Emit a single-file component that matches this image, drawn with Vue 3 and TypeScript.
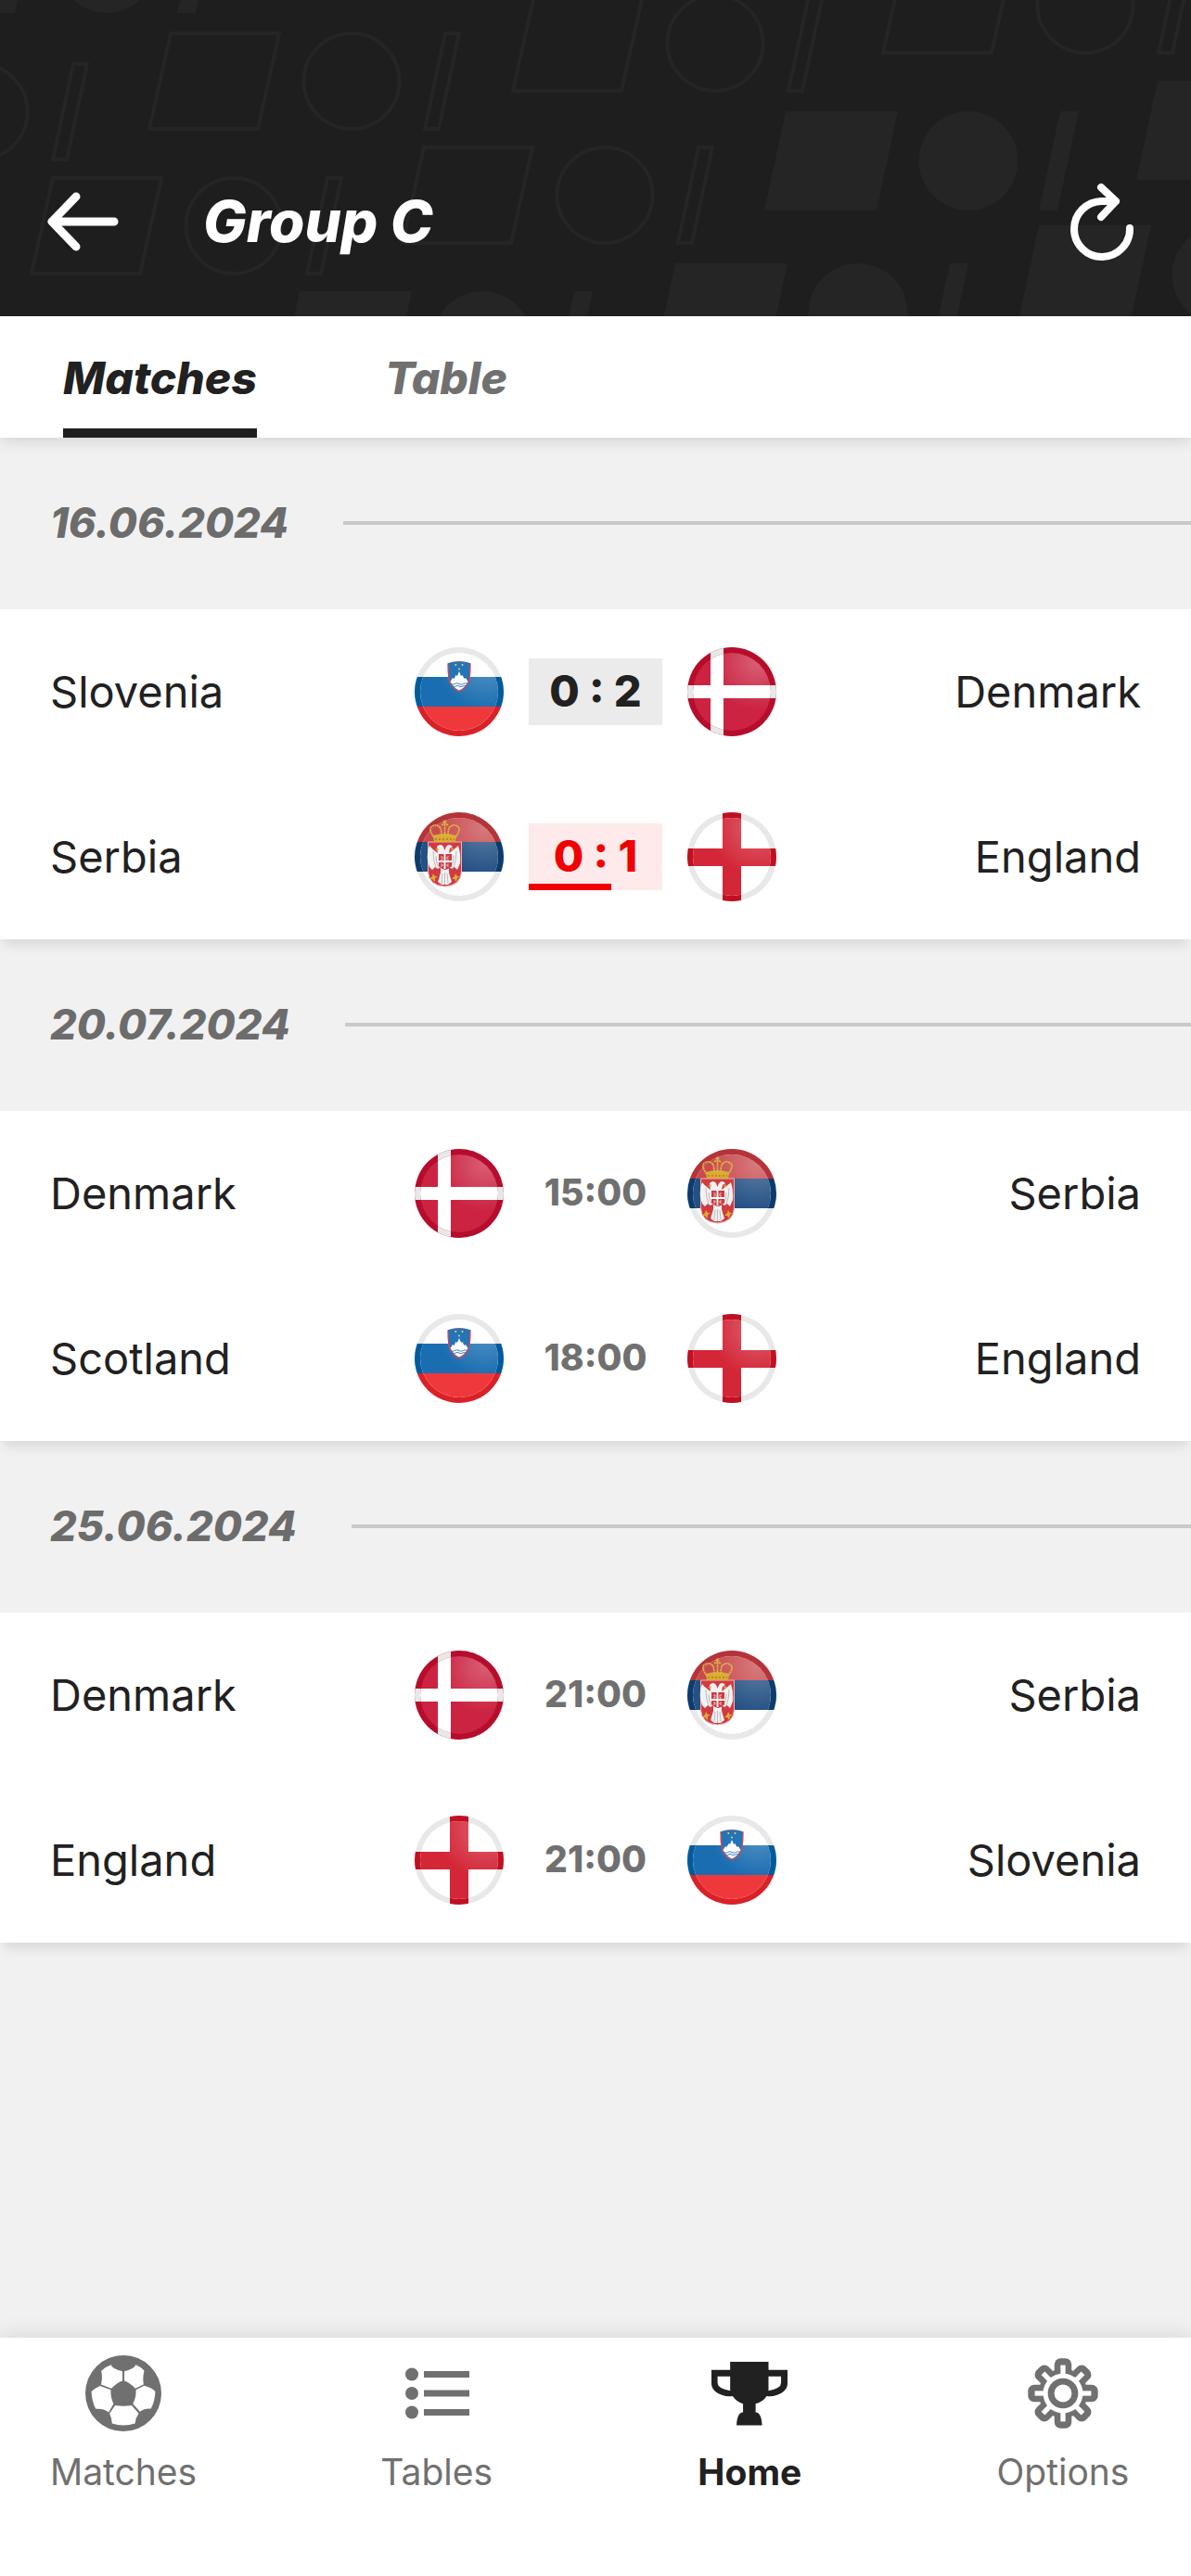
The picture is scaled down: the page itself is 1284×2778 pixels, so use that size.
<script setup lang="ts">
import { ref } from 'vue'

type Team = 'Slovenia' | 'Denmark' | 'Serbia' | 'England' | 'Scotland'

interface Match {
  home: Team
  homeFlag: string
  away: Team
  awayFlag: string
  result: string
  state: 'finished' | 'live' | 'upcoming'
  progress?: number
}

interface MatchDay {
  date: string
  matches: Match[]
}

const tabs = ['Matches', 'Table']
const activeTab = ref('Matches')

const matchDays: MatchDay[] = [
  {
    date: '16.06.2024',
    matches: [
      { home: 'Slovenia', homeFlag: 'slovenia', away: 'Denmark', awayFlag: 'denmark', result: '0 : 2', state: 'finished' },
      { home: 'Serbia', homeFlag: 'serbia', away: 'England', awayFlag: 'england', result: '0 : 1', state: 'live', progress: 62 },
    ],
  },
  {
    date: '20.07.2024',
    matches: [
      { home: 'Denmark', homeFlag: 'denmark', away: 'Serbia', awayFlag: 'serbia', result: '15:00', state: 'upcoming' },
      { home: 'Scotland', homeFlag: 'slovenia', away: 'England', awayFlag: 'england', result: '18:00', state: 'upcoming' },
    ],
  },
  {
    date: '25.06.2024',
    matches: [
      { home: 'Denmark', homeFlag: 'denmark', away: 'Serbia', awayFlag: 'serbia', result: '21:00', state: 'upcoming' },
      { home: 'England', homeFlag: 'england', away: 'Slovenia', awayFlag: 'slovenia', result: '21:00', state: 'upcoming' },
    ],
  },
]

const outlined = [[159, 34], [-242, 67], [551, -7], [950, -48], [32, 190], [432, 157]]
const filled = [[824, 120], [1225, 87], [300, 314], [705, 284], [1097, 243], [-105, -93]]

const navItems = [
  { label: 'Matches', icon: 'ball' },
  { label: 'Tables', icon: 'list' },
  { label: 'Home', icon: 'cup' },
  { label: 'Options', icon: 'gear' },
]
const activeNav = ref('Home')
</script>

<template>
  <div class="app">
    <svg class="defs" aria-hidden="true">
      <defs>
        <clipPath id="disc"><circle cx="48" cy="48" r="48" /></clipPath>
        <clipPath id="inner"><circle cx="48" cy="48" r="42" /></clipPath>
        <radialGradient id="gloss" gradientUnits="userSpaceOnUse" cx="76" cy="16" r="52">
          <stop offset="0" stop-color="#fff" stop-opacity=".27" />
          <stop offset="1" stop-color="#fff" stop-opacity="0" />
        </radialGradient>
      </defs>

      <symbol id="flag-denmark" viewBox="0 0 96 96">
        <g clip-path="url(#disc)">
          <rect width="96" height="96" fill="#b60d2d" />
          <path d="M25 0h14v96H25zM0 41h96v14H0z" fill="#e8e8e8" />
        </g>
        <g clip-path="url(#inner)">
          <rect width="96" height="96" fill="#cb2341" />
          <circle cx="48" cy="48" r="42" fill="url(#gloss)" />
          <path d="M25 0h14v96H25zM0 41h96v14H0z" fill="#fff" />
        </g>
      </symbol>

      <symbol id="flag-england" viewBox="0 0 96 96">
        <g clip-path="url(#disc)">
          <rect width="96" height="96" fill="#e8e8e8" />
          <path d="M38 0h20v96H38zM0 39h96v19H0z" fill="#c01021" />
        </g>
        <g clip-path="url(#inner)">
          <rect width="96" height="96" fill="#fff" />
          <path d="M38 0h20v96H38zM0 39h96v19H0z" fill="#d32637" />
          <circle cx="48" cy="48" r="42" fill="url(#gloss)" />
        </g>
      </symbol>

      <symbol id="flag-slovenia" viewBox="0 0 96 96">
        <g clip-path="url(#disc)">
          <rect width="96" height="96" fill="#e8e8e8" />
          <rect y="32" width="96" height="32" fill="#005b9c" />
          <rect y="64" width="96" height="32" fill="#da2128" />
        </g>
        <g clip-path="url(#inner)">
          <rect width="96" height="96" fill="#fff" />
          <rect y="32" width="96" height="32" fill="#1a6db0" />
          <rect y="64" width="96" height="32" fill="#ee383c" />
          <circle cx="48" cy="48" r="42" fill="url(#gloss)" />
        </g>
        <path d="M36 18Q48 14 60 18Q60 35 57 40Q54 45 48 48Q42 45 39 40Q36 35 36 18Z" fill="#2474b8" stroke="#e0404c" stroke-width="1.3" />
        <path d="M36 18Q48 14 60 18" fill="none" stroke="#2474b8" stroke-width="1.6" />
        <path d="M38.500 37L41 33l1.500 1 2-4 1.500 1 2-5 2 5 1.500-1 2 4 1.500-1 2.500 4Q54 44 48 46.500 42 44 38.500 37Z" fill="#fff" />
        <path d="M39 39.500q2.300 1.500 4.500 0t4.500 0 4.500 0 4.500 0M40.500 42q2 1.200 3.800 0t3.700 0 3.700 0 3.700 0" fill="none" stroke="#2474b8" stroke-width=".9" />
        <g fill="#e8dc50">
          <circle cx="44.300" cy="19" r="1" /><circle cx="51.500" cy="19" r="1" /><circle cx="48" cy="23.500" r="1" />
        </g>
      </symbol>

      <symbol id="flag-serbia" viewBox="0 0 96 96">
        <g clip-path="url(#disc)">
          <rect width="96" height="96" fill="#e8e8e8" />
          <rect width="96" height="32" fill="#b43439" />
          <rect y="32" width="96" height="32" fill="#0c3b6d" />
        </g>
        <g clip-path="url(#inner)">
          <rect width="96" height="96" fill="#fff" />
          <rect width="96" height="32" fill="#c84a4e" />
          <rect y="32" width="96" height="32" fill="#245083" />
          <circle cx="48" cy="48" r="42" fill="url(#gloss)" />
        </g>
        <path d="M14.500 32h36v32q-1 15-18 16-17-1-18-16z" fill="#d23a41" stroke="#e9b9ba" stroke-width="1" />
        <g fill="#f3f1f1">
          <path d="M24 37q4-4 7 0l1.500 4 1.500-4q3-4 7 0l-3 2-1 5q8-6 10-8 3 9 2 19l-3 7-3-3-3 2-3-2v6h-9v-6l-3 2-3-2-3 3-3-3-2-7q-1-9 2-16 3 4 9 8l-1-5z" />
          <path d="M29 62h7l4 13-4 3h-7l-4-3z" />
        </g>
        <path d="M20 42q0 10 3 18M23 47q0 8 3 12M45 42q0 10-3 18M42 47q0 8-3 12M30 66l-1 11M32.500 65v13M35 66l1 11" fill="none" stroke="#b9b3b5" stroke-width=".9" />
        <path d="M26 45h14v13q-3 3-7 4-4-1-7-4z" fill="#cf3940" />
        <path d="M32.500 45v16M26 53h14" stroke="#fff" stroke-width="1.800" />
        <path d="M28 48h2v3h-2M37 48h-2v3h2M28 56h2v2h-2M37 56h-2v2h2" fill="none" stroke="#f2d8d8" stroke-width=".8" />
        <g fill="#d9ad32">
          <path d="M25 38l-3 2 4 1zM40 38l3 2-4 1zM20 66l2 3 3 0-3 2 0 4-3-3-3 0 3-3zM44 66l2 3 3 0-3 2-1 4-2-3-3 0 3-3z" />
          <path d="M20 25q12-4 25 0l-1 7H21z" />
        </g>
        <path d="M21 27q-7-9-2-12 5-3 9 2 1 4 1 9M44 27q7-9 2-12-5-3-9 2-1 4-1 9M32.500 13v13M29 14q3.500-3 7 0M32.500 8.500v5M30.500 10.500h4" fill="none" stroke="#dcb545" stroke-width="1.700" stroke-dasharray="2.200 .5" />
        <path d="M22 29h21" stroke="#a8582c" stroke-width="1.200" stroke-dasharray="2 2" />
      </symbol>

      <symbol id="icon-ball" viewBox="0 0 248 248">
        <circle cx="124" cy="124" r="124" fill="currentColor" />
        <g fill="#fff">
          <path d="M84 31Q86 43 121 52V83Q106 87 85 108L51 95Q57 75 52 51Q66 37 84 31Z" />
          <path d="M164 31Q162 43 127 52V83Q142 87 163 108L190 95Q186 75 192 51Q182 37 164 31Z" />
          <path d="M20 118Q32 107 48 100L83 113Q82 140 92 158L76 186Q60 172 34 175Q21 150 20 118Z" />
          <path d="M228 118Q216 105 192 99L165 113Q166 140 155 158L178 184Q192 172 214 174Q227 150 228 118Z" />
          <path d="M97 163Q124 168 151 163L174 190Q164 204 162 222Q124 234 87 222Q86 204 79 190Z" />
        </g>
      </symbol>

      <symbol id="icon-list" viewBox="0 0 82 82">
        <g fill="currentColor">
          <circle cx="14" cy="20.500" r="7" /><circle cx="14" cy="41" r="7" /><circle cx="14" cy="61.500" r="7" />
          <path d="M27 17h49v7H27zM27 37.500h49v7H27zM27 58h49v7H27z" />
        </g>
      </symbol>

      <symbol id="icon-cup" viewBox="0 0 248 248">
        <path fill="currentColor" fill-rule="evenodd" d="M61 21H186V48H248V94C248 118 214 138 180 133Q168 152 144 158V186C158 186 164 204 165 228H82C83 204 89 186 103 186V158Q82 152 69 133C34 138 0 118 0 94V48H61ZM20 69H61V116Q20 108 20 90ZM227 69H186V116Q227 108 227 90Z" />
      </symbol>

      <symbol id="icon-gear" viewBox="0 0 248 248">
        <g fill="currentColor">
          <circle cx="124" cy="124" r="80" />
          <rect v-for="n in 4" :key="n" x="96" y="10" width="56" height="228" rx="20" :transform="`rotate(${n * 45} 124 124)`" />
        </g>
        <g fill="#fff">
          <circle cx="124" cy="124" r="65" />
          <rect v-for="n in 4" :key="n" x="116" y="32" width="16" height="184" :transform="`rotate(${n * 45} 124 124)`" />
        </g>
        <circle cx="124" cy="124" r="39" fill="#fff" stroke="currentColor" stroke-width="21" />
      </symbol>
    </svg>

    <header class="header">
      <svg class="pattern" viewBox="0 0 1284 341" preserveAspectRatio="xMidYMin slice" aria-hidden="true">
        <g v-for="([x, y], i) in outlined" :key="`o${i}`" :transform="`translate(${x} ${y})`" fill="none" stroke="#252525" stroke-width="4">
          <path d="M25 2H142L119 105H2Z" />
          <circle cx="220" cy="53.500" r="51.500" />
          <path d="M321 2H336L314 105H299Z" />
        </g>
        <g v-for="([x, y], i) in filled" :key="`f${i}`" :transform="`translate(${x} ${y})`" fill="#252525">
          <path d="M23 0H144L121 107H0Z" />
          <circle cx="220" cy="53.500" r="53.500" />
          <path d="M319 0H339L316 107H296Z" />
        </g>
      </svg>
      <button class="icon-button" type="button" aria-label="Back">
        <svg viewBox="0 0 80 64" width="80" height="64" fill="none" stroke="#fff" stroke-width="9" stroke-linecap="round" stroke-linejoin="round">
          <path d="M74 32H7M33 5L7 32L33 59" />
        </svg>
      </button>
      <h1 class="title">Group C</h1>
      <button class="icon-button" type="button" aria-label="Refresh">
        <svg viewBox="0 0 70 84" width="70" height="84" fill="none" stroke="#fff" stroke-width="8" stroke-linecap="round" stroke-linejoin="round">
          <path d="M65 49A30 30 0 1 1 35 20H50M34 5L50 20L34 37" />
        </svg>
      </button>
    </header>

    <div class="tabs" role="tablist">
      <button
        v-for="tab in tabs"
        :key="tab"
        class="tab"
        :class="{ active: tab === activeTab }"
        type="button"
        role="tab"
        :aria-selected="tab === activeTab"
        @click="activeTab = tab"
      >{{ tab }}</button>
    </div>

    <main>
      <section v-for="day in matchDays" :key="day.date">
        <h2 class="date">{{ day.date }}</h2>
        <ul class="matches">
          <li v-for="(match, i) in day.matches" :key="i" class="match">
            <span class="team">{{ match.home }}</span>
            <svg class="flag" aria-hidden="true"><use :href="`#flag-${match.homeFlag}`" /></svg>
            <span class="result" :class="match.state">
              {{ match.result }}
              <span v-if="match.progress" class="progress" :style="{ width: `${match.progress}%` }"></span>
            </span>
            <svg class="flag" aria-hidden="true"><use :href="`#flag-${match.awayFlag}`" /></svg>
            <span class="team away">{{ match.away }}</span>
          </li>
        </ul>
      </section>
    </main>

    <nav class="nav">
      <a
        v-for="item in navItems"
        :key="item.label"
        class="nav-item"
        :class="{ active: item.label === activeNav }"
        :href="`#${item.label.toLowerCase()}`"
        @click="activeNav = item.label"
      >
        <svg class="nav-icon" aria-hidden="true"><use :href="`#icon-${item.icon}`" /></svg>
        {{ item.label }}
      </a>
    </nav>
  </div>
</template>

<style>
body {
  margin: 0;
  background: #f1f1f1;
}
</style>

<style scoped>
.app {
  display: flex;
  flex-direction: column;
  min-height: 100vh;
  background: #f1f1f1;
  color: #212121;
  font-family: Inter, Roboto, "Liberation Sans", sans-serif;
}

.defs {
  position: absolute;
  width: 0;
  height: 0;
}

button {
  padding: 0;
  border: 0;
  background: none;
  font: inherit;
  cursor: pointer;
}

.header {
  position: relative;
  display: flex;
  align-items: center;
  box-sizing: border-box;
  min-height: 341px;
  padding: 136px 61px 0 49px;
  background: #1e1e1e;
}

.pattern {
  position: absolute;
  inset: 0;
  width: 100%;
  height: 100%;
}

.icon-button,
.title {
  position: relative;
}

.icon-button svg {
  display: block;
}

.title {
  flex: 1;
  margin: 0 0 0 90px;
  color: #fff;
  font-size: 62px;
  line-height: 72px;
  font-style: italic;
  font-weight: 800;
}

.tabs {
  display: flex;
  gap: 138px;
  padding: 0 68px;
  background: #fff;
  box-shadow: 0 4px 16px rgba(0, 0, 0, .12);
}

.tab {
  padding: 12px 0 0;
  border-bottom: 10px solid transparent;
  color: #707070;
  font-size: 48px;
  line-height: 109px;
  font-style: italic;
  font-weight: 800;
}

.tab.active {
  border-color: #1e1e1e;
  color: #212121;
}

.date {
  display: flex;
  align-items: center;
  gap: 59px;
  margin: 0;
  padding: 0 0 2px 54px;
  color: #6c6c6c;
  font-size: 45px;
  line-height: 183px;
  font-style: italic;
  font-weight: 800;
}

.date::after {
  flex: 1;
  height: 4px;
  background: #c9c9c9;
  content: "";
}

.matches {
  margin: 0;
  padding: 0;
  background: #fff;
  box-shadow: 0 10px 12px -4px rgba(0, 0, 0, .1);
  list-style: none;
}

.match {
  display: flex;
  align-items: center;
  gap: 27px;
  height: 178px;
  padding: 0 54px;
}

.team {
  flex: 1;
  font-size: 47px;
  line-height: 60px;
}

.away {
  text-align: right;
}

.flag {
  width: 96px;
  height: 96px;
}

.result {
  position: relative;
  box-sizing: border-box;
  width: 144px;
  height: 72px;
  text-align: center;
  font-size: 39px;
  line-height: 70px;
  font-weight: 800;
}

.finished,
.live {
  font-size: 47px;
}

.finished {
  background: #ebebeb;
}

.live {
  background: #feeaea;
  color: #f00000;
}

.upcoming {
  color: #707070;
}

.progress {
  position: absolute;
  bottom: 0;
  left: 0;
  height: 7px;
  background: #f00000;
}

.nav {
  display: flex;
  justify-content: space-between;
  box-sizing: border-box;
  min-height: 257px;
  margin-top: auto;
  padding: 19px 58px 0 53px;
  background: #fff;
  box-shadow: 0 -4px 20px rgba(0, 0, 0, .1);
}

.nav-item {
  display: flex;
  flex-direction: column;
  align-items: center;
  gap: 20px;
  width: 160px;
  color: #707070;
  font-size: 39px;
  line-height: 48px;
  text-decoration: none;
}

.nav-item.active {
  color: #212121;
  font-weight: 700;
}

.nav-icon {
  width: 82px;
  height: 82px;
}
</style>
